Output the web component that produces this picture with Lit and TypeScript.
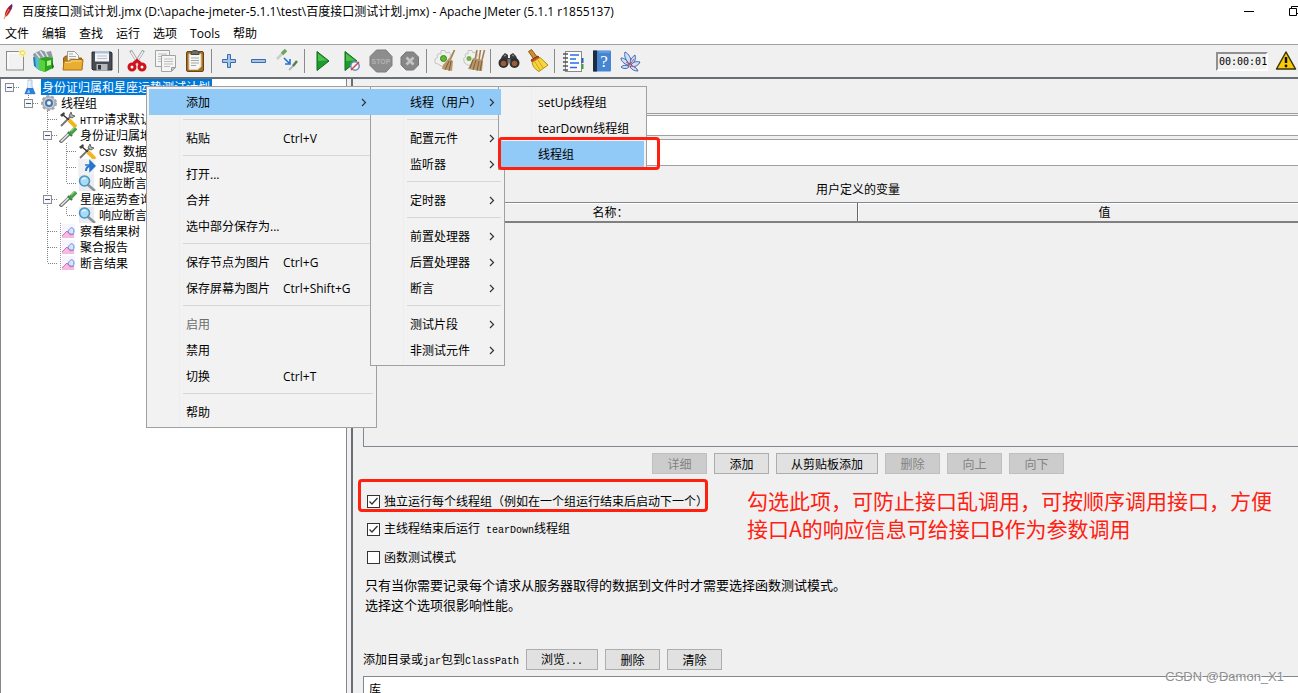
import { LitElement, html, svg, css, nothing, TemplateResult, SVGTemplateResult } from "lit";
import { customElement, property } from "lit/decorators.js";

/* ---------- toolbar icons, drawn on a 24 x 24 grid ---------- */
const ICONS: Record<string, SVGTemplateResult> = {
  new: svg`<rect x="3.500" y="2.500" width="17" height="18.500" fill="#f2f2f4" stroke="#8b8b8b"/><path d="M5 19V4h13" fill="none" stroke="#fff"/><circle cx="19.500" cy="4" r="4" fill="#fbf3a0" opacity=".8"/><circle cx="19.500" cy="4" r="2" fill="#fffbd8" stroke="#e8d648"/>`,
  templates: svg`<path d="M1 5l8-4 5 2 5-1 2 7-18 3z" fill="#8e9aa0"/><path d="M4 4l4 5M8 2l4 6M13 2l3 6" stroke="#dfe6e8" stroke-width="1.500"/><path d="M1 8l6 2v11l-5-4z" fill="#1b7fa8"/><path d="M3 8l4 1v12l-3-2z" fill="#5bb8d8"/><path d="M7 10l7-2 7 1v10l-8 4-6-2z" fill="#2aa51c"/><path d="M7 10l6 2v11l-6-2z" fill="#57d23c"/><path d="M15 12l4-1v5l-4 1z" fill="#b6f09a"/><path d="M20 12l2 6-2 2z" fill="#1a7010"/>`,
  open: svg`<path d="M2.500 20V9l2-2h5l1 2h10v11z" fill="#b27a14" stroke="#8a5c0c"/><path d="M6.500 13V2.500h7l4 4V13z" fill="#f7f7f7" stroke="#9a9a9a"/><path d="M8 5h4M8 7.500h7M8 10h7" stroke="#aaa"/><path d="M2 21l1-9h5l2-1.500h12l-1 10.500z" fill="#e9ad34" stroke="#a8720f"/><path d="M4 13.500h5l2-1.500h9" fill="none" stroke="#f9d987"/>`,
  save: svg`<path d="M2 3h19l1 1v17H3l-1-1z" fill="#474c55" stroke="#2b2e34"/><rect x="5" y="2.500" width="14" height="10" fill="#f3f5f8"/><rect x="5" y="2.500" width="14" height="2" fill="#a9c1dc"/><path d="M7 7h10M7 9.500h10" stroke="#b9bec6"/><rect x="6.500" y="15" width="11" height="6.500" fill="#b5b8bd"/><rect x="8" y="16" width="3" height="4.500" fill="#30343b"/>`,
  cut: svg`<path d="M5.500 1.500L14 15M18.500 1.500L10 15" stroke="#9a9ea3" stroke-width="3"/><path d="M6 2.500L13.500 14.500M18 2.500L10.500 14.500" stroke="#eceeef" stroke-width="1.500"/><path d="M8.500 14.500l3.500-3 3.500 3" stroke="#d0121b" stroke-width="3" fill="none"/><ellipse cx="7" cy="18" rx="3" ry="3" fill="#fff" stroke="#d0121b" stroke-width="3"/><ellipse cx="17" cy="18" rx="3" ry="3" fill="#fff" stroke="#d0121b" stroke-width="3"/>`,
  copy: svg`<g fill="#f5f5f5" stroke="#a2a2a2"><path d="M1.500 1.500h14v16h-14z"/><path d="M7.500 6.500h14v12l-4 4h-10z"/></g><path d="M4 5h9M4 7.500h3M4 10h3M4 12.500h3M10 10h9M10 12.500h9M10 15h9M10 17.500h6" stroke="#bbb"/><path d="M17.500 22v-3.500h4z" fill="#d4d4d4" stroke="#999"/>`,
  paste: svg`<rect x="3.500" y="2.500" width="17" height="20" rx="1.500" fill="#a86f1f" stroke="#6b430d"/><path d="M6 5h12v12.500l-3 3H6z" fill="#f6f6f4" stroke="#d8d0c0"/><path d="M8 9h8M8 11.500h8M8 14h8M8 16.500h5" stroke="#a7a7a7"/><path d="M8 5.500V3l2.500-1.500h3L16 3v2.500z" fill="#6b6f68" stroke="#444"/>`,
  plus: svg`<path d="M9.500 5.500h3v5h5v3h-5v5h-3v-5h-5v-3h5z" fill="#a5c5ea" stroke="#3a6cad"/>`,
  minus: svg`<path d="M4.500 10.500h14v3h-14z" fill="#a5c5ea" stroke="#3a6cad"/>`,
  toggle: svg`<path d="M1 10l6-6" stroke="#c8cfc4" stroke-width="2.500"/><path d="M6 5l4-4" stroke="#6ba55f" stroke-width="3.500"/><path d="M13 21l5-5" stroke="#b5b9b3" stroke-width="2"/><path d="M17 17l4-5" stroke="#58804f" stroke-width="2.500"/><path d="M8 9l5 5M14 10v5H9" stroke="#2470d8" stroke-width="1.600" fill="none"/>`,
  start: svg`<path d="M6 2.500l12 9.500L6 21.500z" fill="#1f9a2d" stroke="#0b6c18"/><path d="M7 4.500l9 7L7 12z" fill="#4fbf4f"/>`,
  startNoPause: svg`<path d="M5 2.500l12 9.500L5 21.500z" fill="#1f9a2d" stroke="#0b6c18"/><path d="M6 4.500l9 7L6 12z" fill="#4fbf4f"/><circle cx="15" cy="17" r="4.200" fill="#f5f6fa" stroke="#6d8cc0" stroke-width="1.500"/><path d="M11 21l8-8" stroke="#d5423a" stroke-width="1.500"/>`,
  stop: svg`<path d="M7.500 1h9.500l6 6.500v9l-6 6.500H7.500L1 16.500v-9z" fill="#8d8d8d" stroke="#7d7d7d"/><text x="12" y="15" font-size="7" font-weight="700" text-anchor="middle" font-family="Liberation Sans, sans-serif" fill="#b3b3b3">STOP</text>`,
  shutdown: svg`<path d="M8 3h7.500l5 5v8l-5 5H8l-5-5V8z" fill="#878787" stroke="#777"/><path d="M8.500 8.500l7 7M15.500 8.500l-7 7" stroke="#c4c4c4" stroke-width="2.600"/>`,
  clear: svg`<path d="M8 1.500h4l1 2.500 3-1 2 3-1.500 2.500 1.500 3-3 4-6 2-4-2.500-3-1 0-4 2.500-1.500L4 6l2-1.500 2 .5z" fill="#f0f0f0" stroke="#c4c4c4"/><circle cx="10.500" cy="9.500" r="3" fill="#5fba2c" stroke="#3c861a"/><path d="M21.500 1L17 11" stroke="#a5814f" stroke-width="1.800"/><path d="M16 9l4 3-1 10-10-2 1-4z" fill="#b8956a"/><path d="M16 12l-4 9M18 12l-2 10" stroke="#806039"/>`,
  clearAll: svg`<path d="M6 1.500h4l1 2.500 3-1 2 3-1.500 2.500-1 5-7 3-4-2.500-1-4.500 2-1.500L3 6l1-1.500 2 .5z" fill="#f0f0f0" stroke="#c4c4c4"/><circle cx="7" cy="9.500" r="2.500" fill="#6db343"/><path d="M15 1l-2 10M18.500 1L17 11M22.500 1L20 11" stroke="#a5814f" stroke-width="1.600"/><path d="M11 9l10 2-1 11-14-2 2-4z" fill="#b8956a"/><path d="M11 11l-3 8M14 11l-3 10M17 12l-2 10M20 12l-2 10" stroke="#806039"/>`,
  search: svg`<path d="M5 7l3-3 3 2v3h2V6l3-2 3 3 3 7H2z" fill="#3b3b3b"/><circle cx="6.500" cy="14" r="5" fill="#2e2e2e"/><circle cx="17.500" cy="14" r="5" fill="#2e2e2e"/><circle cx="6.500" cy="14.500" r="2.800" fill="#9b5c3c"/><circle cx="17.500" cy="14.500" r="2.800" fill="#9b5c3c"/><path d="M7 7l2-1M15 6l2 1" stroke="#9a9a9a"/><rect x="10.500" y="10" width="3" height="4" fill="#777"/>`,
  reset: svg`<path d="M2.500 2.500l3-2 6 8-3.500 2z" fill="#d08f2a" stroke="#8c5a14"/><path d="M5 11l7-4 2 3-7 4z" fill="#c4462b" stroke="#8a2a18"/><path d="M6 13.500l8-5 8 7.500-9 6.500c-4-2-6-5-7-9z" fill="#f6d63c" stroke="#b38f12"/><path d="M9 13l5 8M12 11l5 8" stroke="#cda41c"/>`,
  helper: svg`<rect x="4.500" y="2.500" width="16" height="20" fill="#fcfcfc" stroke="#8a8a8a"/><path d="M9 6h9M9 10h6M9 14h9M9 18.500h7" stroke="#2a6fe0" stroke-width="1.500"/><path d="M2 5h5M2 9h5M2 13h5M2 17h5M2 21h5" stroke="#555" stroke-width="1.500"/><path d="M21.500 9v5" stroke="#245fc0" stroke-width="2"/><path d="M21.500 15v5" stroke="#38a33d" stroke-width="2"/>`,
  help: svg`<rect x="3" y="1.500" width="18" height="21" rx="1" fill="#4585d2"/><rect x="3" y="1.500" width="4" height="21" fill="#1f2c3d"/><path d="M9 3h11" stroke="#7fb0ea"/><text x="14" y="18" font-size="17" text-anchor="middle" font-family="Liberation Serif, serif" fill="#fff">?</text>`,
  feather: svg`<g fill="#cfe0f6" stroke="#4468b4" stroke-width="1"><path d="M10 15C6 10 5 6 6 3c4 2 6 6 6 10z"/><path d="M11 15c0-4 2-7 5-9 1 4 0 7-3 9z"/><path d="M9 16C5 15 2 12 2 9c4 0 7 3 8 7z"/><path d="M12 16c2-3 5-4 9-3-1 3-5 5-8 5z"/><path d="M10 17c-3-1-6-1-8 1 2 2 6 2 8 0z"/><path d="M12 17c3 0 6 2 7 5-3 0-6-1-8-4z"/></g><path d="M7 13l10 6M15 10l-6 8" stroke="#d04a5a"/>`,
};

/* ---------- tree icons, drawn on a 18 x 16 grid ---------- */
const NODE_ICONS: Record<string, SVGTemplateResult> = {
  plan: svg`<path d="M7 1h4v6l3 8H4l3-8z" fill="#dbe9f7" stroke="#b4c6da"/><path d="M6 9h6l2.500 6h-11z" fill="#2b7fd8"/><path d="M8 2v7" stroke="#fff"/><path d="M8 10l-2 4h3z" fill="#9ccbf8"/>`,
  group: svg`<circle cx="9" cy="8" r="7" fill="#cfd2d8" stroke="#a3a6ac" stroke-width="2" stroke-dasharray="3 2"/><circle cx="9" cy="8" r="6" fill="#c9cdd4" stroke="#a3a6ac"/><circle cx="9" cy="8" r="4" fill="#4a74b0"/><circle cx="9" cy="8" r="2" fill="#eef4fb"/>`,
  config: svg`<path d="M2 15L13 4" stroke="#777" stroke-width="2"/><path d="M12 1l1 3 3 1-3 2-3-2z" fill="#b5b5b5" stroke="#666"/><path d="M3 3l7 6" stroke="#333" stroke-width="1.500"/><path d="M1 4l4-3 1 2-3 3z" fill="#444"/><path d="M10 9l7 7" stroke="#f0b81c" stroke-width="4"/>`,
  sampler: svg`<path d="M1 15.500L10 7" stroke="#777" stroke-width="3.500"/><path d="M2 14.500l8-8" stroke="#e4ece6" stroke-width="1.500"/><path d="M9 5l4 4" stroke="#2f7030" stroke-width="2"/><path d="M11 7l6-6" stroke="#4c9d48" stroke-width="4"/><path d="M12 4l4-4" stroke="#8fce7a" stroke-width="1.500"/>`,
  extract: svg`<rect x="0" y="0" width="16" height="16" fill="#f1f1f1"/><path d="M7 6h5M12 2l5 5-5 5z" fill="#2775d0" stroke="#2775d0" stroke-width="1.500"/><path d="M8 12c0-3 1-5 5-5" stroke="#2775d0" stroke-width="2" fill="none"/>`,
  assertion: svg`<rect x="1" y="0" width="15" height="16" fill="#ececef"/><path d="M9 9l8 7" stroke="#8b9099" stroke-width="2.500"/><circle cx="6.500" cy="6" r="5" fill="#a8dcf5" stroke="#4c93c2" stroke-width="1.600"/><path d="M4 5c1-2 3-2 4-1" stroke="#fff" fill="none"/>`,
  listener: svg`<path d="M1.500 0v16" stroke="#999" stroke-dasharray="1 1"/><rect x="3" y="1" width="13" height="14" fill="#f7f5fc"/><path d="M3 13l5-5 3 4 4-2v5H3z" fill="#f6b9e3"/><path d="M3 13l5-5 3 4 4-1" stroke="#e069b4" fill="none"/><path d="M9 9c2-6 6-5 6-1 0 4-3 4-6 1z" fill="#d6e4fb" stroke="#6c8cd8"/>`,
};

type NodeDef = { text: TemplateResult | string; icon: string; cells: string[]; selected?: boolean };

/* Guide cells: "." empty, "|" line, "+" tee, "L" corner; "-" marks an open handle. */
const NODES: NodeDef[] = [
  { text: "身份证归属和星座运势测试计划", icon: "plan", cells: ["-"], selected: true },
  { text: "线程组", icon: "group", cells: [".", "L-"] },
  { text: html`<span class="latin">HTTP</span>请求默认值`, icon: "config", cells: [".", ".", "+"] },
  { text: "身份证归属地查询", icon: "sampler", cells: [".", ".", "+-"] },
  { text: html`<span class="latin">CSV </span>数据文件设置`, icon: "config", cells: [".", ".", "|", "+"] },
  { text: html`<span class="latin">JSON</span>提取器`, icon: "extract", cells: [".", ".", "|", "+"] },
  { text: "响应断言", icon: "assertion", cells: [".", ".", "|", "L"] },
  { text: "星座运势查询", icon: "sampler", cells: [".", ".", "+-"] },
  { text: "响应断言", icon: "assertion", cells: [".", ".", "|", "L"] },
  { text: "察看结果树", icon: "listener", cells: [".", ".", "+"] },
  { text: "聚合报告", icon: "listener", cells: [".", ".", "+"] },
  { text: "断言结果", icon: "listener", cells: [".", ".", "L"] },
];

@customElement("test-tree")
export class TestTree extends LitElement {
  static styles = css`
    :host { display: block; overflow: hidden; background: #fff; border-left: 1px solid #828790; border-right: 1px solid #828790; }
    .tree { list-style: none; margin: 0; padding: 0; }
    .node { display: flex; align-items: center; height: 16px; white-space: nowrap; color: #000; }
    .guide { flex: none; width: 19px; height: 16px; }
    .icon { flex: none; width: 18px; height: 16px; margin-left: 1px; }
    .name { margin-left: 2px; padding: 0 2px 0 1px; line-height: 16px; }
    .selected { background: #0078d7; color: #fff; }
    .latin { font: 10px "Liberation Mono", monospace; white-space: pre; }
  `;

  private guide(kind: string) {
    const dots = (d: string) => svg`<path d=${d} stroke="#808080" stroke-dasharray="1 1" fill="none"/>`;
    return html`<svg class="guide" viewBox="0 0 19 16" aria-hidden="true">
      ${/[|+]/.test(kind) ? dots("M8.5 0V16") : nothing}
      ${kind.includes("L") ? dots("M8.5 0V8") : nothing}
      ${/[+L-]/.test(kind) ? dots("M9 8.5H19") : nothing}
      ${kind.includes("-")
        ? svg`<rect x="4.5" y="4.5" width="8" height="8" fill="#f8f8f8" stroke="#8c8c8c"/><path d="M6 8.5h5" stroke="#2f56a8"/>`
        : nothing}
    </svg>`;
  }

  render() {
    return html`<ul class="tree" role="tree">
      ${NODES.map(
        (n) => html`<li class="node" role="treeitem">
          ${n.cells.map((c) => this.guide(c))}
          <svg class="icon" viewBox="0 0 18 16" aria-hidden="true">${NODE_ICONS[n.icon]}</svg>
          <span class="name ${n.selected ? "selected" : ""}">${n.text}</span>
        </li>`
      )}
    </ul>`;
  }
}

type Entry = { text: string; key?: string; arrow?: boolean; off?: boolean; on?: boolean; marked?: boolean; sub?: MenuDef } | null;
type MenuDef = { size: string; entries: Entry[] };

const MENU: MenuDef = {
  size: "main",
  entries: [
    {
      text: "添加", arrow: true, on: true,
      sub: {
        size: "kinds",
        entries: [
          {
            text: "线程（用户）", arrow: true, on: true,
            sub: {
              size: "threads",
              entries: [{ text: "setUp线程组" }, { text: "tearDown线程组" }, { text: "线程组", on: true, marked: true }],
            },
          },
          null,
          { text: "配置元件", arrow: true },
          { text: "监听器", arrow: true },
          null,
          { text: "定时器", arrow: true },
          null,
          { text: "前置处理器", arrow: true },
          { text: "后置处理器", arrow: true },
          { text: "断言", arrow: true },
          null,
          { text: "测试片段", arrow: true },
          { text: "非测试元件", arrow: true },
        ],
      },
    },
    null,
    { text: "粘贴", key: "Ctrl+V" },
    null,
    { text: "打开..." },
    { text: "合并" },
    { text: "选中部分保存为..." },
    null,
    { text: "保存节点为图片", key: "Ctrl+G" },
    { text: "保存屏幕为图片", key: "Ctrl+Shift+G" },
    null,
    { text: "启用", off: true },
    { text: "禁用" },
    { text: "切换", key: "Ctrl+T" },
    null,
    { text: "帮助" },
  ],
};

@customElement("context-menu")
export class ContextMenu extends LitElement {
  @property({ attribute: false }) menu: MenuDef = MENU;

  static styles = css`
    :host { display: block; }
    .menu { list-style: none; margin: 0; box-sizing: border-box; padding: 2px 3px 2px 2px; border: 1px solid #a0a0a0;
      background: linear-gradient(90deg, #f2f2f2 32px, #ededed 32px, #ededed 33px, #f2f2f2 33px); }
    .main { width: 231px; }
    .kinds { width: 135px; }
    .threads { width: 149px; padding-right: 2px; }
    .sub { position: absolute; z-index: 2; top: -3px; left: calc(100% - 3px); }
    .entry { position: relative; }
    .item { box-sizing: border-box; display: flex; align-items: center; width: 100%; height: 26px; margin: 0; border: 0;
      padding: 0 6px 0 37px; background: transparent; color: #000; font: inherit; text-align: left; white-space: nowrap; }
    .item:disabled { color: #6d6d6d; }
    .on { position: relative; z-index: 3; background: #91c9f7; }
    .label { flex: 1; padding-top: 2px; }
    .key { flex: none; width: 84px; padding-top: 2px; }
    .arrow { flex: none; width: 6px; height: 9px; }
    .rule { height: 10px; padding: 4px 0 0 34px; box-sizing: border-box; }
    .line { height: 1px; background: #d7d7d7; }
    .mark { position: absolute; z-index: 4; inset: -4px -16px -3px -3px; border: 3px solid #ff2010; border-radius: 4px; pointer-events: none; }
  `;

  private list(menu: MenuDef, nested: boolean): TemplateResult {
    return html`<ul class="menu ${menu.size} ${nested ? "sub" : ""}" role="menu">
      ${menu.entries.map((e) =>
        e === null
          ? html`<li class="rule" role="separator"><div class="line"></div></li>`
          : html`<li class="entry" role="none">
              <button class="item ${e.on ? "on" : ""}" role="menuitem" ?disabled=${e.off}>
                <span class="label">${e.text}</span>
                ${e.key ? html`<span class="key">${e.key}</span>` : nothing}
                ${e.arrow
                  ? html`<svg class="arrow" viewBox="0 0 6 9" aria-hidden="true"><path d="M1 1l3.500 3.500L1 8" fill="none" stroke="#333" stroke-width="1.200"/></svg>`
                  : nothing}
              </button>
              ${e.sub ? this.list(e.sub, true) : nothing}
              ${e.marked ? html`<div class="mark"></div>` : nothing}
            </li>`
      )}
    </ul>`;
  }

  render() {
    return this.list(this.menu, false);
  }
}

const TOOLBAR: [string, string, boolean?][][] = [
  [["new", "新建"], ["templates", "模板"], ["open", "打开"], ["save", "保存"]],
  [["cut", "剪切"], ["copy", "复制"], ["paste", "粘贴"]],
  [["plus", "展开"], ["minus", "折叠"], ["toggle", "切换"]],
  [["start", "启动"], ["startNoPause", "不停顿启动"], ["stop", "停止", true], ["shutdown", "关闭", true]],
  [["clear", "清除"], ["clearAll", "清除全部"]],
  [["search", "查找"], ["reset", "重置查找"]],
  [["helper", "函数助手"], ["help", "帮助"], ["feather", "关于"]],
];

@customElement("app-root")
export class AppRoot extends LitElement {
  static styles = css`
    :host { position: relative; display: flex; flex-direction: column; height: 100vh; overflow: hidden; background: #f0f0f0;
      color: #000; font: 12px/16px "Open Sans", "Noto Sans CJK SC", sans-serif; }

    .title { flex: none; display: flex; align-items: center; height: 23px; padding-left: 2px; background: #fff; white-space: nowrap; }
    .logo { flex: none; width: 12px; height: 18px; margin-right: 8px; }
    .caption { flex: 1; margin: 0; font: inherit; }
    .window { display: flex; gap: 34px; margin-right: -2px; }
    .window svg { width: 11px; height: 11px; }
    .menubar { flex: none; display: flex; gap: 13px; height: 21px; padding: 0 5px; background: #fff; border-bottom: 1px solid #a0a0a0; }
    .top { border: 0; margin: 0; padding: 0; background: none; font: inherit; line-height: 21px; color: inherit; }

    .toolbar { flex: none; display: flex; align-items: center; height: 32px; border-bottom: 2px solid #696e75; }
    .group { display: flex; height: 26px; align-items: center; }
    .group + .group::before { content: ""; width: 1px; height: 24px; margin: 0 3px 0 2px; background: #8a8a8a; }
    .tool { display: flex; align-items: center; justify-content: center; width: 29px; height: 26px; margin: 0; padding: 0; border: 0; background: none; }
    .tool svg { width: 24px; height: 24px; }
    .spacer { flex: 1; }
    .clock { box-sizing: border-box; width: 52px; height: 19px; padding: 1px 0 0 1px; border: 2px solid #fff; border-top-color: #909090; border-left-color: #909090;
      font: 10px/14px "DejaVu Sans Mono", monospace; white-space: nowrap; }
    .warn { width: 22px; height: 22px; margin: 0 1px 0 7px; }

    .body { flex: 1; display: grid; grid-template-columns: 347px minmax(0, 1fr); column-gap: 4px; min-height: 0; overflow: hidden;
      font-family: "Noto Sans CJK SC", sans-serif; }
    .pane { border-left: 2px solid #696e75; overflow: hidden; min-width: 0; }
    /* the form is wider than the pane and runs on past its right edge */
    .form { margin-right: -55px; padding-left: 10px; }
    .head { height: 34px; border-bottom: 1px solid #a0a0a0; margin-bottom: 1px; }
    .field { display: block; box-sizing: border-box; width: calc(100% - 40px); margin: 0 0 3px 40px; border: 1px solid #a0a0a0; background: #fff; padding: 0 4px; font: inherit; }
    .name { height: 21px; }
    .note { height: 27px; }
    .vars-title { margin: 15px 0 5px; font: inherit; line-height: 16px; text-align: center; }
    .vars { box-sizing: border-box; height: 245px; border: 1px solid #828790; }
    table { width: 100%; border-collapse: collapse; table-layout: fixed; }
    th { height: 18px; padding: 0; font-weight: 400; line-height: 16px; border-right: 1px solid #696969; border-bottom: 2px solid #808080; box-shadow: inset 1px 1px #fff; }
    .actions { display: flex; justify-content: center; gap: 7px; padding: 6px 0 13px; }
    .btn { box-sizing: border-box; min-width: 55px; height: 21px; margin: 0; padding: 0 14px; border: 1px solid #adadad; background: #e1e1e1; color: #000; font: inherit; line-height: 16px; white-space: nowrap; }
    .btn:disabled { border-color: #bfbfbf; background: #ccc; color: #838383; }

    .options { position: relative; }
    .check { display: flex; align-items: center; width: max-content; height: 28px; padding-left: 4px; white-space: nowrap; }
    .check input { appearance: none; width: 13px; height: 13px; margin: 0 4px 0 0; border: 1px solid #333; background: #fff center / 11px 11px no-repeat; }
    .check input:checked { background-image: url("data:image/svg+xml,%3Csvg xmlns='http://www.w3.org/2000/svg' viewBox='0 0 11 11'%3E%3Cpath d='M1.500 5.500l2.500 2.500 5.500-6' fill='none' stroke='%23333' stroke-width='1.300'/%3E%3C/svg%3E"); }
    .latin { font: 10px/14px "Liberation Mono", monospace; white-space: pre; }
    .frame { position: absolute; top: -8px; left: -5px; width: 350px; height: 33px; box-sizing: border-box; border: 3px solid #ff2010; border-radius: 4px; pointer-events: none; }
    .remark { position: absolute; top: -1px; left: 384px; margin: 0; color: #ff2010; font-size: 21px; line-height: 28px; white-space: nowrap; }
    .hint { margin: 4px 0 34px; padding-left: 2px; font-size: 13px; line-height: 20px; }
    .paths { display: flex; align-items: center; gap: 7px; margin-bottom: 6px; white-space: nowrap; }
    .library { height: 80px; border: 1px solid #828790; background: #fff; padding: 4px 5px; }
    .watermark { position: absolute; right: 14px; bottom: 8px; color: #8f8f8f; font: 13px/16px "Liberation Sans", sans-serif; text-shadow: 1px 1px #fff; }
    .popup { position: absolute; z-index: 5; top: 86px; left: 146px; }
  `;

  render() {
    return html`
      <header class="title">
        <svg class="logo" viewBox="0 0 12 18" aria-hidden="true"><path d="M3 14C2 10 5 4 10 1c1 3-2 9-5 12z" fill="#c8202e"/><path d="M6 6l4-5c1 2 0 4-1 6z" fill="#5c2a78"/><path d="M2 16L7 6" stroke="#e88a2c"/></svg>
        <h1 class="caption">百度接口测试计划.jmx (D:\\apache-jmeter-5.1.1\\test\\百度接口测试计划.jmx) - Apache JMeter (5.1.1 r1855137)</h1>
        <div class="window" aria-hidden="true">
          <svg viewBox="0 0 11 11"><path d="M0 5.500h10" stroke="#000"/></svg>
          <svg viewBox="0 0 11 11"><path d="M.5 2.500h7v7h-7zM2.500 2.500v-2h8v7h-3" fill="none" stroke="#000"/></svg>
        </div>
      </header>
      <nav class="menubar">
        ${["文件", "编辑", "查找", "运行", "选项", "Tools", "帮助"].map((t) => html`<button class="top">${t}</button>`)}
      </nav>
      <div class="toolbar" role="toolbar">
        ${TOOLBAR.map(
          (g) => html`<div class="group">
            ${g.map(
              ([id, label, off]) => html`<button class="tool" aria-label=${label} ?disabled=${off}><svg viewBox="0 0 24 24">${ICONS[id]}</svg></button>`
            )}
          </div>`
        )}
        <div class="spacer"></div>
        <div class="clock">00:00:01</div>
        <svg class="warn" viewBox="0 0 22 22" aria-hidden="true"><path d="M11 2l9.500 17h-19z" fill="#fccb05" stroke="#3a3208" stroke-width="1.500" stroke-linejoin="round"/><path d="M11 7v6" stroke="#111" stroke-width="2.500"/><circle cx="11" cy="16" r="1.400" fill="#111"/></svg>
      </div>
      <main class="body">
        <test-tree></test-tree>
        <section class="pane">
          <div class="form">
            <div class="head"></div>
            <input class="field name" aria-label="名称" />
            <input class="field note" aria-label="注释" />
            <h2 class="vars-title">用户定义的变量</h2>
            <div class="vars">
              <table><thead><tr><th>名称：</th><th>值</th></tr></thead></table>
            </div>
            <div class="actions">
              <button class="btn" disabled>详细</button>
              <button class="btn">添加</button>
              <button class="btn">从剪贴板添加</button>
              <button class="btn" disabled>删除</button>
              <button class="btn" disabled>向上</button>
              <button class="btn" disabled>向下</button>
            </div>
            <div class="options">
              <label class="check"><input type="checkbox" checked /><span>独立运行每个线程组（例如在一个组运行结束后启动下一个）</span></label>
              <label class="check"><input type="checkbox" checked /><span>主线程结束后运行<span class="latin"> tearDown</span>线程组</span></label>
              <label class="check"><input type="checkbox" /><span>函数测试模式</span></label>
              <div class="frame"></div>
              <p class="remark">勾选此项，可防止接口乱调用，可按顺序调用接口，方便<br />接口A的响应信息可给接口B作为参数调用</p>
            </div>
            <p class="hint">只有当你需要记录每个请求从服务器取得的数据到文件时才需要选择函数测试模式。<br />选择这个选项很影响性能。</p>
            <div class="paths">
              <span>添加目录或<span class="latin">jar</span>包到<span class="latin">ClassPath</span></span>
              <button class="btn">浏览<span class="latin">...</span></button>
              <button class="btn">删除</button>
              <button class="btn">清除</button>
            </div>
            <div class="library">库</div>
          </div>
        </section>
      </main>
      <context-menu class="popup"></context-menu>
      <div class="watermark">CSDN @Damon_X1</div>
    `;
  }
}
